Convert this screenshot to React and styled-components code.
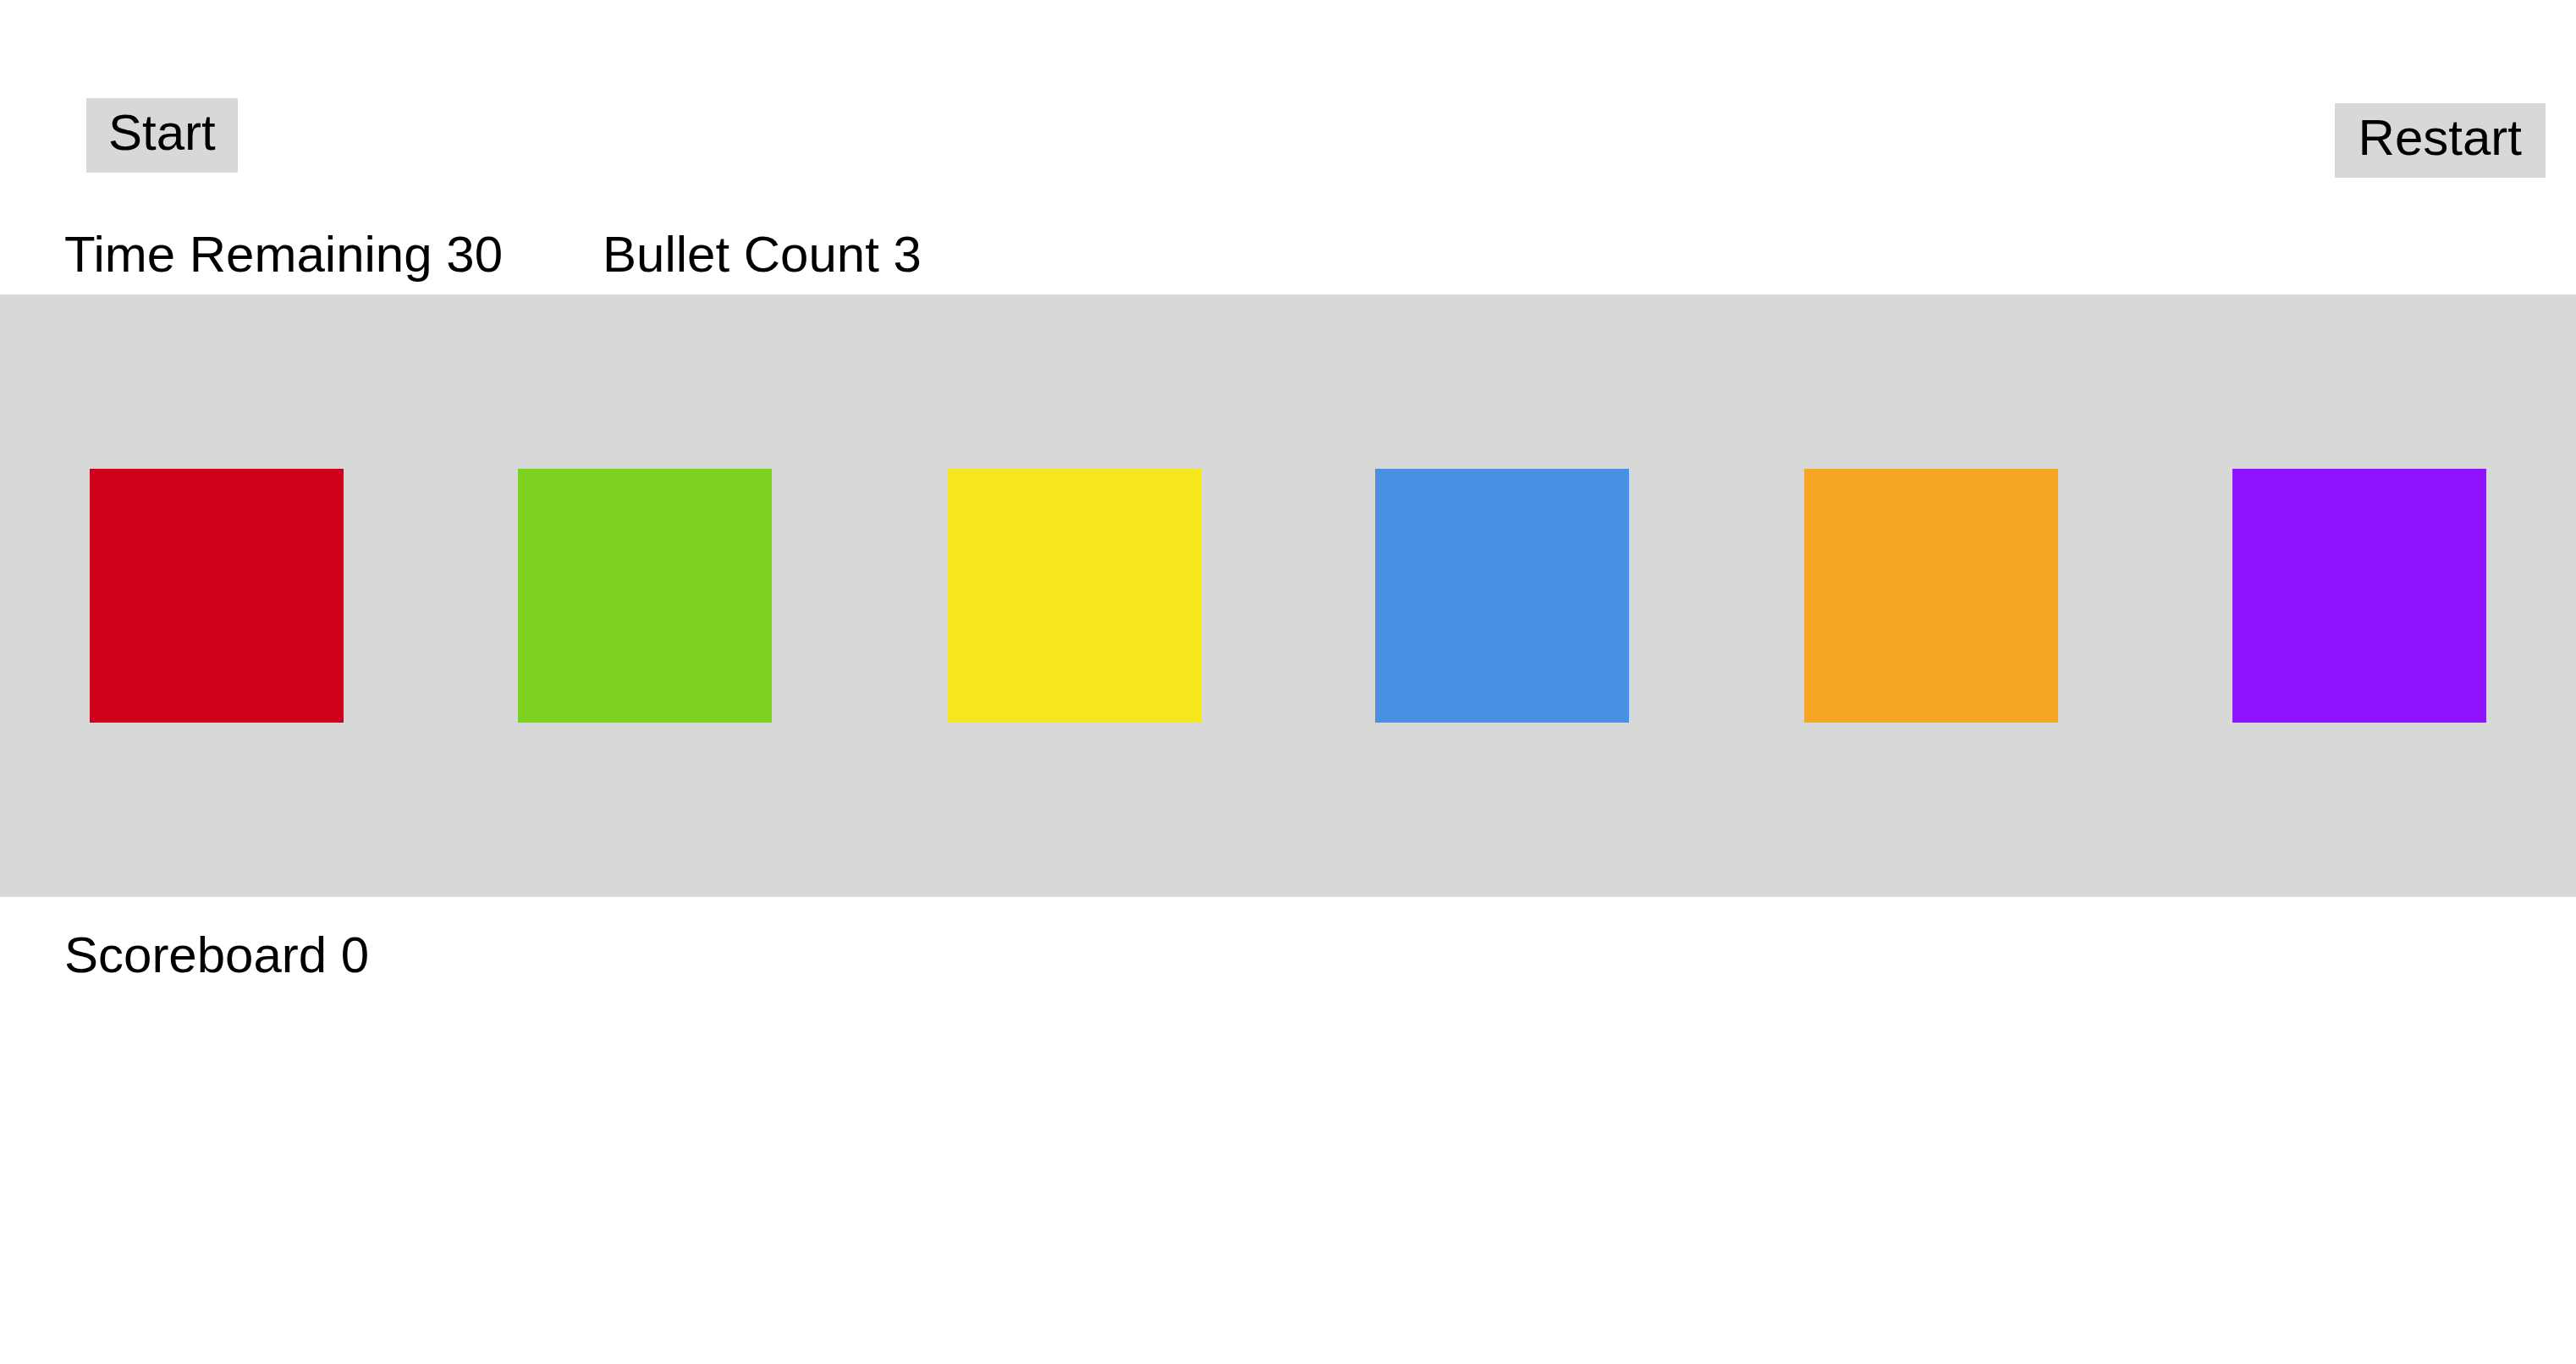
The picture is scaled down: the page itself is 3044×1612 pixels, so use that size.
import React from "react";
import styled, { createGlobalStyle } from "styled-components";

const GlobalStyle = createGlobalStyle`
  body {
    margin: 0;
    background: #ffffff;
    font-family: "Liberation Sans", Arial, sans-serif;
    color: #000000;
  }
`;

const targets = ["#d0021b", "#7ed321", "#f8e71c", "#4a90e2", "#f5a623", "#9013fe"];

const App = () => {
  return (
    <Wrapper>
      <GlobalStyle />
      <Controls>
        <GameButton $pad={26}>Start</GameButton>
        <GameButton $pad={28} $offset={6}>
          Restart
        </GameButton>
      </Controls>
      <Stats>
        <span>Time Remaining 30</span>
        <span>Bullet Count 3</span>
      </Stats>
      <Field>
        {targets.map((color) => (
          <Target key={color} $color={color} />
        ))}
      </Field>
      <Score>Scoreboard 0</Score>
    </Wrapper>
  );
};

const Wrapper = styled.main`
  min-height: 100vh;
  font-size: 60px;
`;

/* top row: start on the left, restart on the right */
const Controls = styled.div`
  display: flex;
  justify-content: space-between;
  align-items: flex-start;
  padding: 116px 36px 0 102px;
`;

const GameButton = styled.button`
  height: 88px;
  margin-top: ${({ $offset }) => $offset || 0}px;
  padding: 6px ${({ $pad }) => $pad}px 13px;
  border: none;
  background-color: #d8d8d8;
  font-family: inherit;
  font-size: 60px;
  line-height: normal;
  color: #000000;
  cursor: pointer;
`;

const Stats = styled.div`
  display: flex;
  gap: 118px;
  margin-top: 56px;
  padding-left: 76px;
  line-height: normal;
`;

/* grey play field with the six targets */
const Field = styled.section`
  display: flex;
  justify-content: space-between;
  align-items: center;
  height: 712px;
  margin-top: 13px;
  padding: 0 106px;
  background-color: #d8d8d8;
`;

const Target = styled.div`
  width: 300px;
  height: 300px;
  background-color: ${({ $color }) => $color};
`;

const Score = styled.div`
  margin-top: 34px;
  padding-left: 76px;
  line-height: normal;
`;

export default App;
